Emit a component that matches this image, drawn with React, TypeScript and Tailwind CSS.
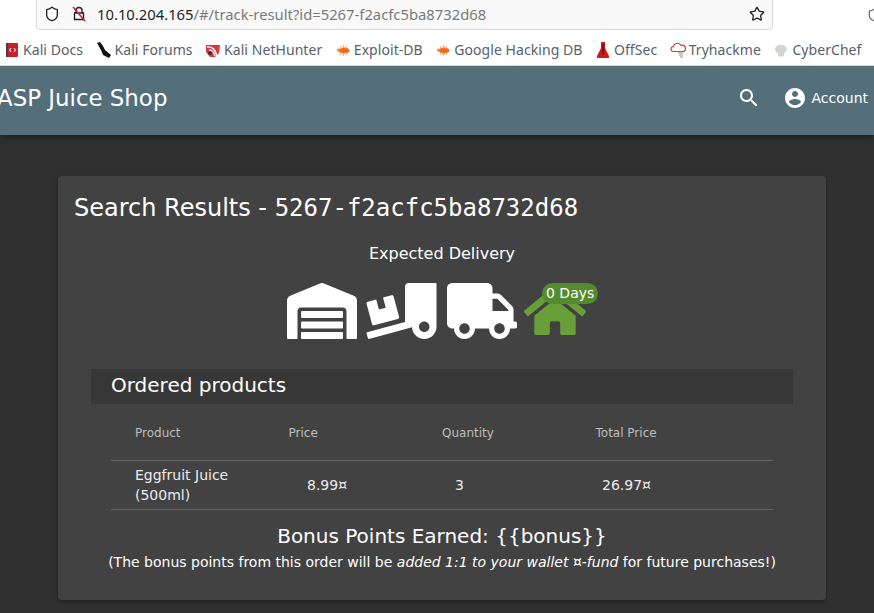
import { FaHome, FaTruck, FaTruckLoading, FaWarehouse } from "react-icons/fa";
import { Star, Shield } from "lucide-react";

const bookmarks = [
  { name: "Kali Docs", icon: <DocsIcon /> },
  { name: "Kali Forums", icon: <ForumsIcon /> },
  { name: "Kali NetHunter", icon: <NetHunterIcon /> },
  { name: "Exploit-DB", icon: <BugIcon /> },
  { name: "Google Hacking DB", icon: <BugIcon /> },
  { name: "OffSec", icon: <OffSecIcon /> },
  { name: "Tryhackme", icon: <CloudIcon /> },
  { name: "CyberChef", icon: <ChefIcon /> },
];

export default function App() {
  return (
    <div className="w-[874px] h-[613px] overflow-hidden flex flex-col bg-[#303030] font-['DejaVu_Sans',sans-serif]">
      <BrowserChrome />
      <header className="h-[69px] shrink-0 pb-[5px] bg-[#546e7a] flex items-center text-white shadow-[0_3px_5px_rgba(0,0,0,0.3)]">
        <span className="-ml-[3px] text-[22.9px]">ASP Juice Shop</span>
        <div className="ml-auto flex items-center">
          <svg viewBox="0 0 24 24" fill="currentColor" className="w-[24px] h-[24px] mr-[22px]">
            <path d="M15.5 14h-.79l-.28-.27C15.41 12.59 16 11.11 16 9.5 16 5.91 13.09 3 9.5 3S3 5.91 3 9.5 5.91 16 9.5 16c1.61 0 3.09-.59 4.23-1.57l.27.28v.79l5 4.99L20.49 19l-4.99-5zm-6 0C7.01 14 5 11.99 5 9.5S7.01 5 9.5 5 14 7.01 14 9.5 11.99 14 9.500 14z" />
          </svg>
          <svg viewBox="0 0 24 24" fill="currentColor" className="w-[24px] h-[24px]">
            <path d="M12 2C6.48 2 2 6.48 2 12s4.48 10 10 10 10-4.48 10-10S17.52 2 12 2zm0 3c1.66 0 3 1.34 3 3s-1.34 3-3 3-3-1.34-3-3 1.34-3 3-3zm0 14.2c-2.5 0-4.71-1.28-6-3.22.03-1.99 4-3.08 6-3.08 1.99 0 5.97 1.09 6 3.08-1.29 1.94-3.5 3.22-6 3.22z" />
          </svg>
          <span className="ml-[4px] mr-[6px] text-sm">Account</span>
        </div>
      </header>
      <main className="pt-[41px] px-[58px]">
        <section className="w-[768px] h-[424px] rounded bg-[#424242] text-white shadow-[0_2px_4px_rgba(0,0,0,0.3)] flex flex-col">
          <h1 className="pl-[16px] pt-[15px] text-[24px] leading-[34px]">
            Search Results - <span className="font-['DejaVu_Sans_Mono',monospace]">5267-f2acfc5ba8732d68</span>
          </h1>
          <p className="mt-[18px] text-center text-base leading-[22px]">Expected Delivery</p>
          <div className="mt-[18px] ml-[229px] h-[56px] flex items-end">
            <FaWarehouse className="w-[70px] h-[56px]" />
            <FaTruckLoading className="ml-[9px] w-[71px] h-[56px]" />
            <FaTruck className="ml-[10px] w-[70px] h-[56px]" />
            <div className="relative ml-[7px] w-[62px] h-[56px]">
              <FaHome className="absolute left-0 bottom-0 w-[62px] h-[56px] text-[#689f38]" />
              <span className="absolute left-[18px] top-0 h-[21px] px-[4px] rounded-full bg-[#558b2f] text-[14px] leading-[21px] whitespace-nowrap">0 Days</span>
            </div>
          </div>
          <h2 className="mt-[30px] mx-[33px] h-[35px] pl-[20px] bg-[#373737] text-[20px] leading-[33px]">Ordered products</h2>
          <div className="mt-[1px] mx-[53px]">
            <div className="grid grid-cols-[153.5px_153.5px_153.5px_200px] h-[56px] border-b border-[#636363] pl-[24px] text-xs leading-[56px] text-[#bdbdbd]">
              <span>Product</span>
              <span>Price</span>
              <span>Quantity</span>
              <span>Total Price</span>
            </div>
            <div className="grid grid-cols-[153.5px_153.5px_153.5px_200px] h-[49px] border-b border-[#636363] pl-[24px] items-center text-sm leading-[20px] text-[#ececec]">
              <span className="w-[110px]">Eggfruit Juice (500ml)</span>
              <span className="pl-[18.5px]">8.99¤</span>
              <span className="pl-[13px]">3</span>
              <span className="pl-[6.500px]">26.97¤</span>
            </div>
          </div>
          <p className="mt-[12px] text-center text-[20px] leading-[28px]">Bonus Points Earned: {"{{bonus}}"}</p>
          <p className="mt-[2px] text-center text-sm leading-[20px]">
            (The bonus points from this order will be <em>added 1:1 to your wallet ¤-fund</em> for future purchases!)
          </p>
        </section>
      </main>
    </div>
  );
}

function BrowserChrome() {
  return (
    <div className="relative h-[66px] shrink-0 bg-white border-b border-[#d6d6d6] font-['Noto_Sans',sans-serif]">
      <div className="absolute left-[36px] -top-[2px] w-[737px] h-[32px] rounded-b border border-[#d8d8d8] bg-[#f9f9fa] flex items-center pl-[7px]">
        <Shield size={16} className="text-[#222]" />
        <BrokenLockIcon />
        <span className="ml-[10px] text-[14.8px] text-[#1f1f1f]">
          10.10.204.165<span className="text-[#7a7a7a]">/#/track-result?id=5267-f2acfc5ba8732d68</span>
        </span>
        <Star size={16} className="ml-auto mr-[7px] text-[#222]" />
      </div>
      <Shield size={14} className="absolute left-[867px] top-[8px] text-[#666]" />
      <div className="absolute left-[4px] top-[40px] flex items-center gap-[12.5px] text-[14px] tracking-[0.06px] leading-[20px] text-[#57606e] whitespace-nowrap">
        {bookmarks.map((b) => (
          <div key={b.name} className="flex items-center gap-[3px]">
            {b.icon}
            <span>{b.name}</span>
          </div>
        ))}
      </div>
    </div>
  );
}

function BrokenLockIcon() {
  return (
    <svg viewBox="0 0 16 16" className="ml-[11px] w-[16px] h-[16px]">
      <path d="M5 7V4.5a3 3 0 016 0V7M3.5 7h9v6.5h-9z" fill="none" stroke="#222" strokeWidth="1.4" />
      <path d="M2 1l12 14" stroke="#e0103a" strokeWidth="1.4" />
    </svg>
  );
}

function DocsIcon() {
  return (
    <svg viewBox="0 0 14 16" className="w-[16px] h-[16px]">
      <rect x="1" y="1" width="12" height="14" rx="1" fill="#c8202a" />
      <rect x="1" y="1" width="2" height="14" fill="#3b3f5c" />
      <path d="M6 6L4.6 8 6 10M9 6l1.4 2L9 10" fill="none" stroke="#fff" strokeWidth="1" />
    </svg>
  );
}

function ForumsIcon() {
  return (
    <svg viewBox="0 0 16 16" className="w-[16px] h-[16px]">
      <path d="M1 1l3-1 3 4 2 4 6 5-2 3-6-3-2-5z" fill="#111" />
    </svg>
  );
}

function NetHunterIcon() {
  return (
    <svg viewBox="0 0 16 16" className="w-[16px] h-[16px]">
      <path d="M1 3h14l-1 8-4 4H5L1 10z" fill="#d8383f" />
      <path d="M2 5c5-1 9 3 10 9M4 8c3 0 5 2 6 6" fill="none" stroke="#fff" strokeWidth="1.4" />
      <circle cx="5" cy="11" r="2" fill="#333" />
    </svg>
  );
}

function BugIcon() {
  return (
    <svg viewBox="0 0 16 16" className="w-[16px] h-[16px]">
      <ellipse cx="9" cy="8.5" rx="5.5" ry="3" fill="#ee6a1f" />
      <circle cx="3.5" cy="8" r="1.6" fill="#f28a44" />
      <path d="M5 4l2 3M8 3l1 3M12 4l-2 3M5 13l2-3M8 14l1-3M12 13l-2-3" stroke="#f4a06a" strokeWidth="1" />
    </svg>
  );
}

function OffSecIcon() {
  return (
    <svg viewBox="0 0 14 16" className="w-[16px] h-[16px]">
      <path d="M5 0h4v6l4 8v2H1v-2l4-8z" fill="#d0181f" />
      <path d="M6.500 2h1v11h-1z" fill="#2a0a0a" />
    </svg>
  );
}

function CloudIcon() {
  return (
    <svg viewBox="0 0 16 16" className="w-[16px] h-[16px]">
      <path d="M3.500 9.500a2.500 2.500 0 010-5 4 4 0 017.500-1 3 3 0 012.500 6z" fill="none" stroke="#d8333a" strokeWidth="1.1" />
      <path d="M8 11h5M9 13h4M10 15h3" stroke="#a88" strokeWidth="1.200" />
    </svg>
  );
}

function ChefIcon() {
  return (
    <svg viewBox="0 0 16 16" className="w-[16px] h-[16px]">
      <path d="M5 11C2 10 1 6 3.500 4.500 5 2 11 2 12.500 4.500 15 6 14 10 11 11v3.500H5z" fill="#d4d4d0" />
    </svg>
  );
}
